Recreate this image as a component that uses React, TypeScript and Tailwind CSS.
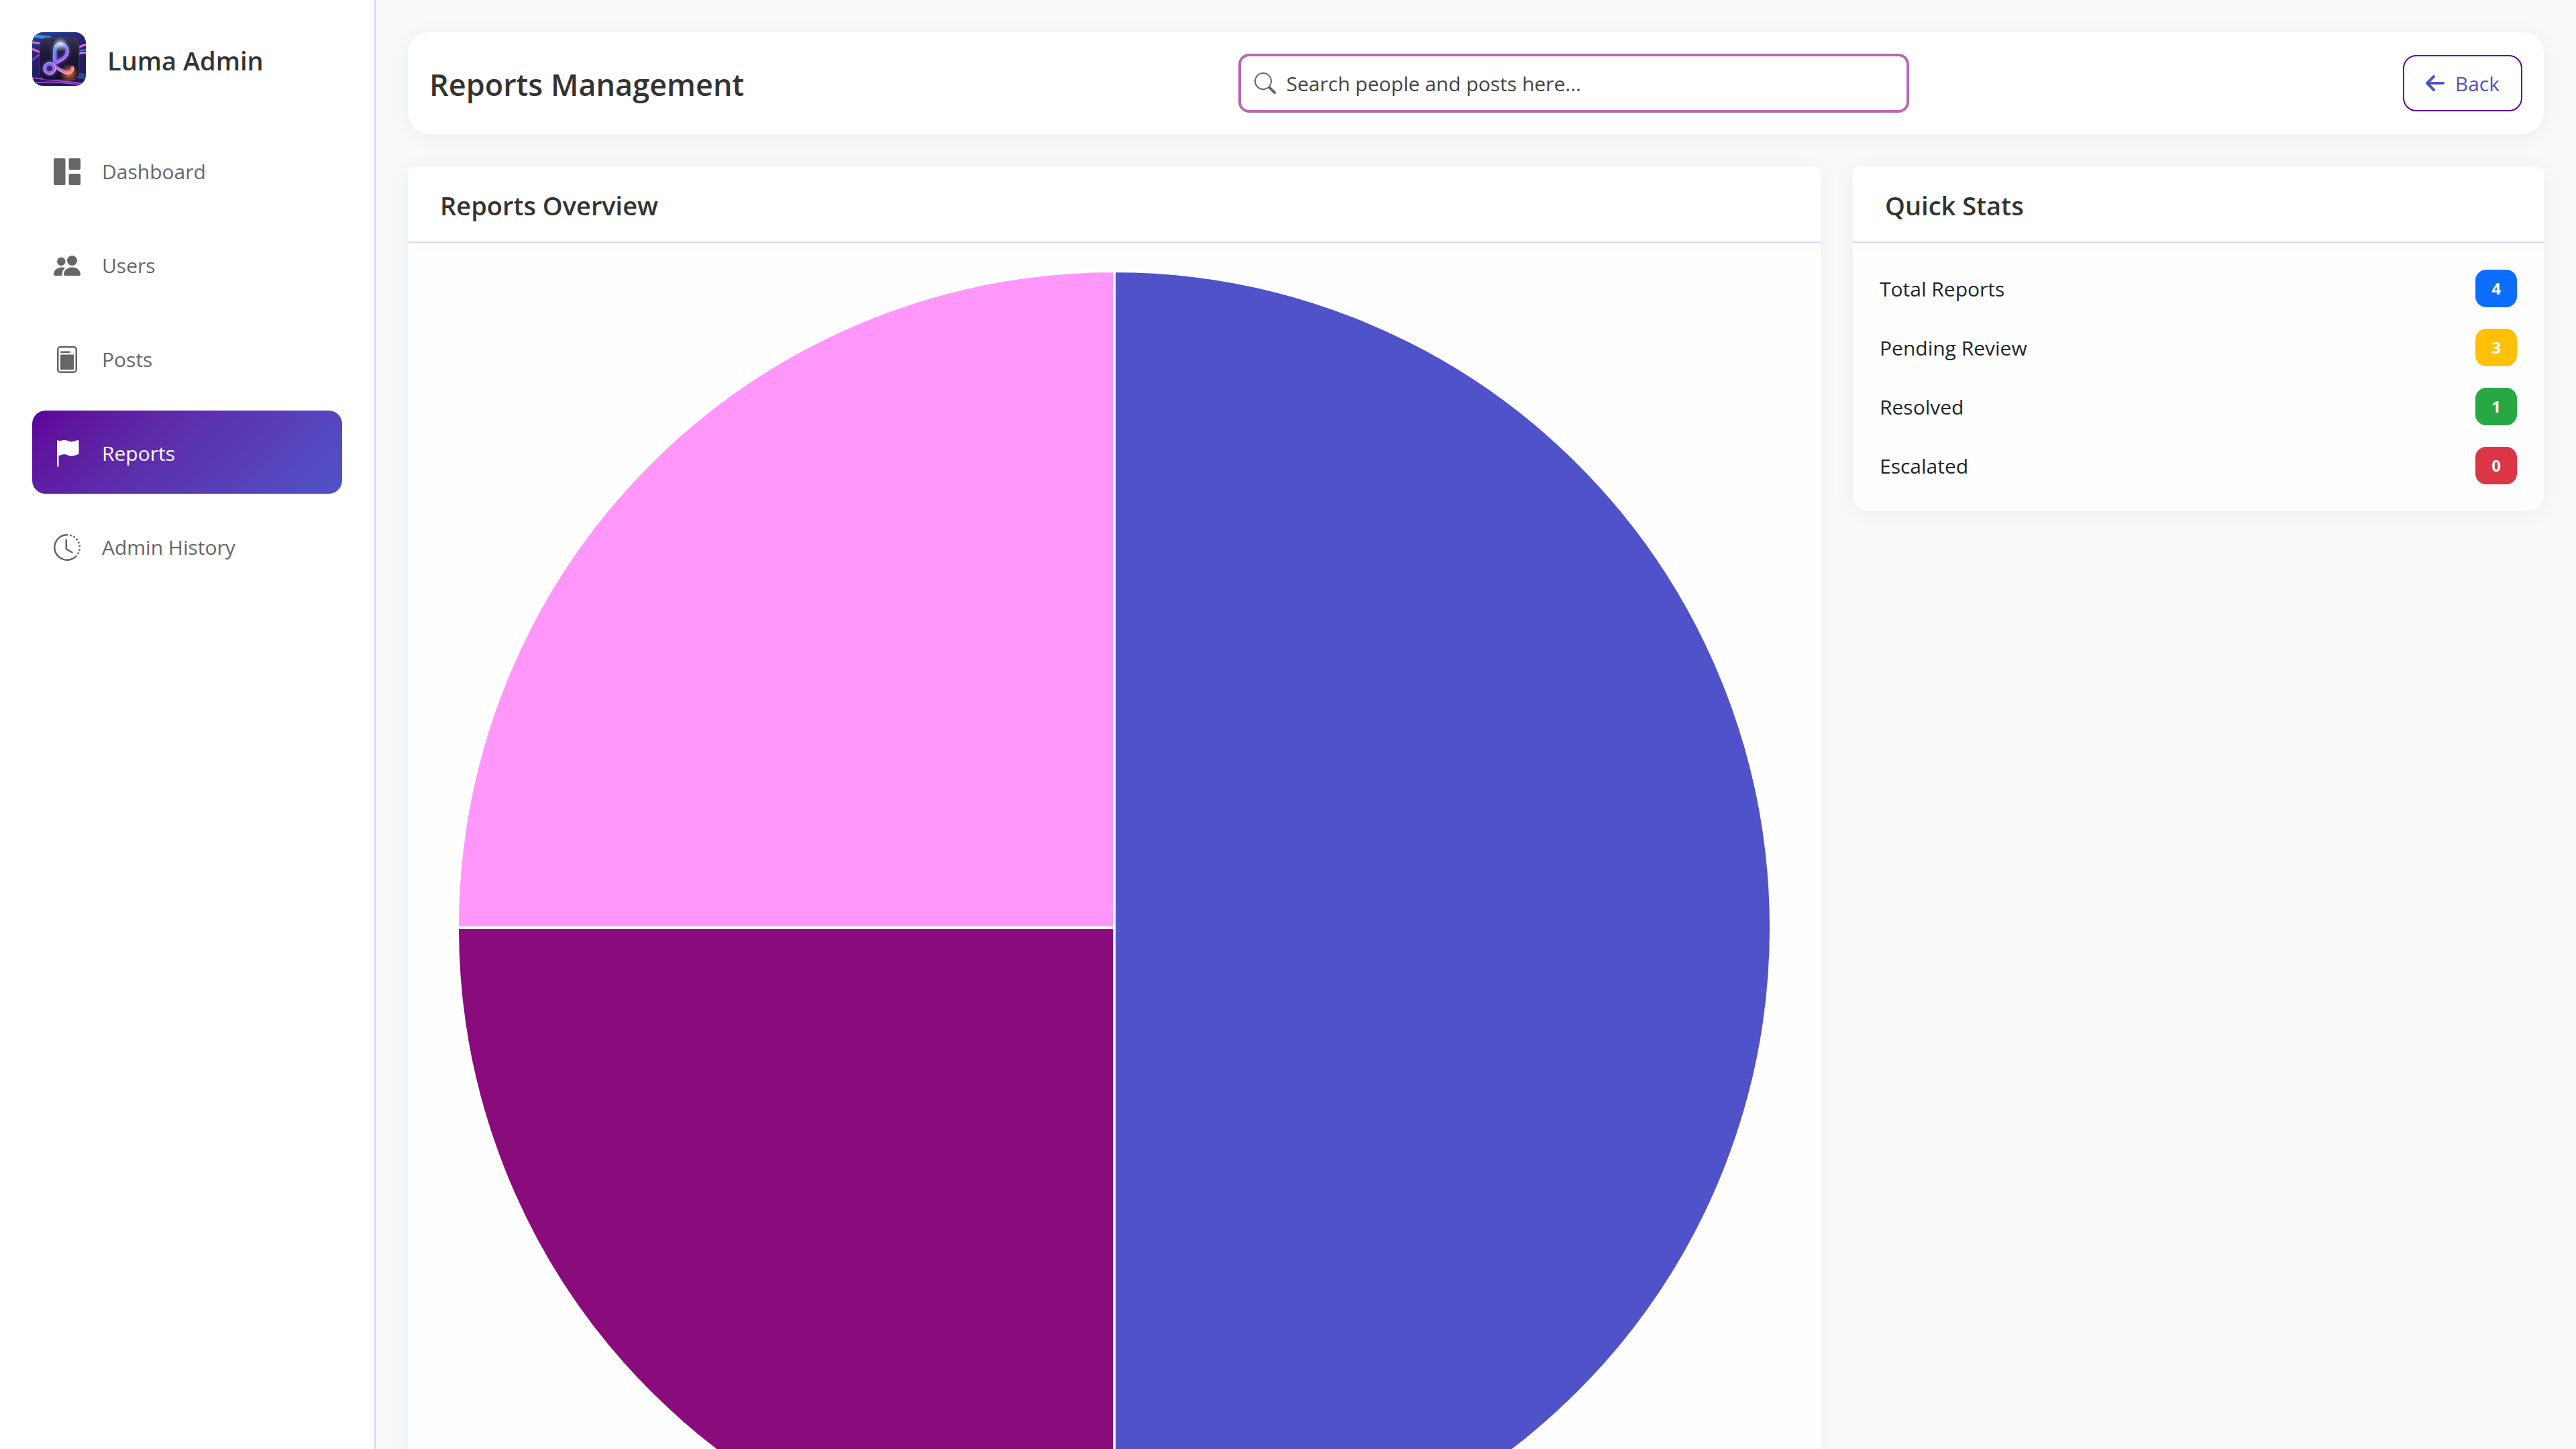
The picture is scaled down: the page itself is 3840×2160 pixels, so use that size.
import { BsFlagFill, BsClockHistory, BsSearch, BsPeopleFill } from "react-icons/bs";
import type { ReactNode } from "react";

function DashboardIcon() {
  return (
    <svg viewBox="0 0 40 40" className="size-10" fill="currentColor" aria-hidden="true">
      <rect x="0" y="0" width="17.5" height="40" rx="2" />
      <rect x="22.5" y="0" width="17.5" height="17" rx="2" />
      <rect x="22.5" y="23" width="17.5" height="17" rx="2" />
    </svg>
  );
}

function PostsIcon() {
  return (
    <svg viewBox="0 0 16 16" className="size-10" fill="currentColor" aria-hidden="true">
      <path fillRule="evenodd" d="M4 0a2 2 0 0 0-2 2v12a2 2 0 0 0 2 2h8a2 2 0 0 0 2-2V2a2 2 0 0 0-2-2zm0 1h8a1 1 0 0 1 1 1v12a1 1 0 0 1-1 1H4a1 1 0 0 1-1-1V2a1 1 0 0 1 1-1" />
      <path d="M4.5 3h5a.5.5 0 0 1 0 1h-5a.5.5 0 0 1 0-1M4.3 5h7.4a.3.3 0 0 1 .3.3v8.4a.3.3 0 0 1-.3.3H4.3a.3.3 0 0 1-.3-.3V5.300a.3.3 0 0 1 .3-.3" />
    </svg>
  );
}

function BackArrow() {
  return (
    <svg viewBox="0 0 28 28" className="size-7" fill="none" stroke="currentColor" strokeWidth="4" strokeLinecap="round" strokeLinejoin="round" aria-hidden="true">
      <path d="M26 14H2M12 4 2 14l10 10" />
    </svg>
  );
}

function Logo() {
  return (
    <svg viewBox="0 0 80 80" className="size-20 rounded-2xl" aria-hidden="true">
      <defs>
        <linearGradient id="bg" x1="0" y1="0" x2="0.4" y2="1">
          <stop offset="0" stopColor="#1f4596" />
          <stop offset="0.45" stopColor="#2a2170" />
          <stop offset="1" stopColor="#1f1a58" />
        </linearGradient>
        <linearGradient id="tile" x1="0" y1="0" x2="0" y2="1">
          <stop offset="0" stopColor="#3a3350" />
          <stop offset="0.4" stopColor="#1d1838" />
          <stop offset="1" stopColor="#17102c" />
        </linearGradient>
        <linearGradient id="neon" gradientUnits="userSpaceOnUse" x1="26" y1="18" x2="60" y2="60">
          <stop offset="0" stopColor="#4fc4dc" />
          <stop offset="0.3" stopColor="#6a78f0" />
          <stop offset="0.6" stopColor="#a060f4" />
          <stop offset="0.85" stopColor="#d878c8" />
          <stop offset="1" stopColor="#f49a6c" />
        </linearGradient>
        <radialGradient id="ember">
          <stop offset="0" stopColor="#ff8a3c" stopOpacity="0.9" />
          <stop offset="1" stopColor="#ff6a2c" stopOpacity="0" />
        </radialGradient>
        <radialGradient id="shine">
          <stop offset="0" stopColor="#ffffff" stopOpacity="0.7" />
          <stop offset="1" stopColor="#ffffff" stopOpacity="0" />
        </radialGradient>
        <filter id="soft" x="-20%" y="-20%" width="140%" height="140%">
          <feGaussianBlur stdDeviation="2" />
        </filter>
      </defs>
      <rect width="80" height="80" fill="url(#bg)" />
      <g fill="none" strokeWidth="2">
        <path d="M0 5C12 6 18 9 28 8" stroke="#3f8df0" strokeWidth="5" />
        <path d="M0 15l12 2M0 25l12 5" stroke="#e070c4" strokeWidth="3" />
        <path d="M0 42l12-10" stroke="#a04ad8" />
        <path d="M68 24c4-3 8-5 12-5M68 34c4-4 8-4 12-3" stroke="#e070dc" strokeWidth="3" />
        <path d="M68 28l12-2" stroke="#4c7cf0" />
        <path d="M66 64l14 2" stroke="#2f6ea8" strokeWidth="8" opacity=".6" />
        <path d="M0 68c26 3 52 6 80 9M0 76c20-3 46-2 80 4" stroke="#a548cc" />
      </g>
      <rect x="11" y="8" width="59" height="63" rx="11" fill="url(#tile)" stroke="#4a4468" strokeWidth="0.8" />
      <circle cx="55" cy="61" r="14" fill="url(#ember)" />
      <g fill="none" stroke="url(#neon)" strokeWidth="8" opacity="0.5" filter="url(#soft)">
        <path d="M34 44V28c0-7 3-10 8-10 6 0 10 4 10 10 0 9-8 13-18 18" />
        <circle cx="26" cy="54" r="7" />
      </g>
      <g fill="none" stroke="url(#neon)" strokeLinecap="round" strokeLinejoin="round" strokeWidth="5">
        <path d="M34 44V28c0-7 3-10 8-10 6 0 10 4 10 10 0 9-8 13-18 18" />
        <circle cx="26" cy="54" r="7" />
        <path d="M33 50c8 6 18 13 24 9 2-1 3-4 3-6" />
      </g>
      <g fill="none" stroke="#efe4ff" strokeWidth="0.9" opacity=".85">
        <path d="M32 44V28c0-8 4-12 10-12 7 0 12 5 12 12 0 9-8 14-17 18" />
        <circle cx="26" cy="54" r="9" />
        <path d="M34 53c8 6 18 12 24 8 3-2 4-4 4-8" />
      </g>
      <circle cx="42" cy="18" r="11" fill="url(#shine)" />
    </svg>
  );
}

const navItems: { label: string; icon: ReactNode; active?: boolean }[] = [
  { label: "Dashboard", icon: <DashboardIcon /> },
  { label: "Users", icon: <BsPeopleFill className="size-10" /> },
  { label: "Posts", icon: <PostsIcon /> },
  { label: "Reports", icon: <BsFlagFill className="size-10" />, active: true },
  { label: "Admin History", icon: <BsClockHistory className="size-10" /> },
];

const stats = [
  { label: "Total Reports", value: 4, color: "bg-[#0d6efd]" },
  { label: "Pending Review", value: 3, color: "bg-[#ffc107]" },
  { label: "Resolved", value: 1, color: "bg-[#28a745]" },
  { label: "Escalated", value: 0, color: "bg-[#dc3545]" },
];

const shadow = "shadow-[0_4px_30px_rgba(0,0,0,0.05)]";

function CardHeader({ title }: { title: string }) {
  return (
    <div className="rounded-t-[10px] border-b-2 border-[#ded3ff] bg-white px-12 pt-[30px] pb-[26px]">
      <h2 className="text-[38px] leading-14 font-semibold text-[#333]">{title}</h2>
    </div>
  );
}

function PieChart() {
  return (
    <svg viewBox="0 0 2026 1958" className="w-full overflow-visible" role="img" aria-label="Reports by status">
      <g stroke="#fff" strokeWidth="4" strokeLinejoin="round">
        <path d="M1013 979V0a979 979 0 0 1 0 1958z" fill="#4f52c8" />
        <path d="M1013 979v979A979 979 0 0 1 34 979z" fill="#8a0b7c" />
        <path d="M1013 979H34A979 979 0 0 1 1013 0z" fill="#ff97fa" />
      </g>
    </svg>
  );
}

export default function App() {
  return (
    <div className="flex h-screen overflow-hidden bg-[#f8f9fb] font-['Open_Sans',sans-serif] text-[30px] leading-12 text-[#212529]">
      <aside className="w-[560px] shrink-0 border-r-2 border-[#ded3ff] bg-white p-12">
        <div className="mb-16 flex h-20 items-center gap-8">
          <Logo />
          <span className="pt-1 text-[38px] font-semibold text-[#333]">Luma Admin</span>
        </div>
        <nav className="flex flex-col gap-4">
          {navItems.map((item) => (
            <a
              key={item.label}
              href="#"
              aria-current={item.active ? "page" : undefined}
              className={
                item.active
                  ? "flex h-31 items-center gap-8 rounded-[20px] bg-linear-135 from-[#5f0099] to-[#4f52c8] px-8 pt-1 text-white"
                  : "flex h-31 items-center gap-8 rounded-[20px] px-8 pt-1 text-[#666]"
              }
            >
              {item.icon}
              {item.label}
            </a>
          ))}
        </nav>
      </aside>

      <main className="flex min-w-0 flex-1 flex-col gap-12 p-12">
        <header className={`flex h-38 shrink-0 items-center justify-between rounded-[32px] bg-white px-8 ${shadow}`}>
          <h1 className="pt-1 text-[45px] leading-14 font-semibold text-[#333]">Reports Management</h1>
          <label className="flex h-22 w-full max-w-[1000px] items-center gap-4 rounded-2xl border-4 border-[#b968ae] px-5">
            <BsSearch className="size-8 shrink-0 text-[#666]" />
            <input
              type="search"
              aria-label="Search people and posts"
              placeholder="Search people and posts here..."
              className="w-full bg-transparent pt-0.5 outline-none placeholder:text-[#444] placeholder:opacity-100"
            />
          </label>
          <button type="button" className="flex h-21 items-center gap-4 rounded-[20px] border-2 border-[#5f0099] px-8 text-[#4f52c8]">
            <BackArrow />
            <span className="pt-0.5">Back</span>
          </button>
        </header>

        <div className="grid grid-cols-[2106fr_1030fr] items-start gap-12">
          <section className={`rounded-t-[10px] rounded-b-3xl bg-[#fefefe] ${shadow}`}>
            <CardHeader title="Reports Overview" />
            <div className="px-10 pt-[42px] pb-10">
              <PieChart />
            </div>
          </section>

          <section className={`rounded-t-[10px] rounded-b-3xl bg-[#fefefe] ${shadow}`}>
            <CardHeader title="Quick Stats" />
            <dl className="flex flex-col gap-8 p-10">
              {stats.map((stat) => (
                <div key={stat.label} className="flex h-14 items-center justify-between">
                  <dt className="pt-0.5">{stat.label}</dt>
                  <dd className={`flex h-14 w-[62px] items-center justify-center rounded-2xl text-[24px] font-bold text-white ${stat.color}`}>
                    {stat.value}
                  </dd>
                </div>
              ))}
            </dl>
          </section>
        </div>
      </main>
    </div>
  );
}
